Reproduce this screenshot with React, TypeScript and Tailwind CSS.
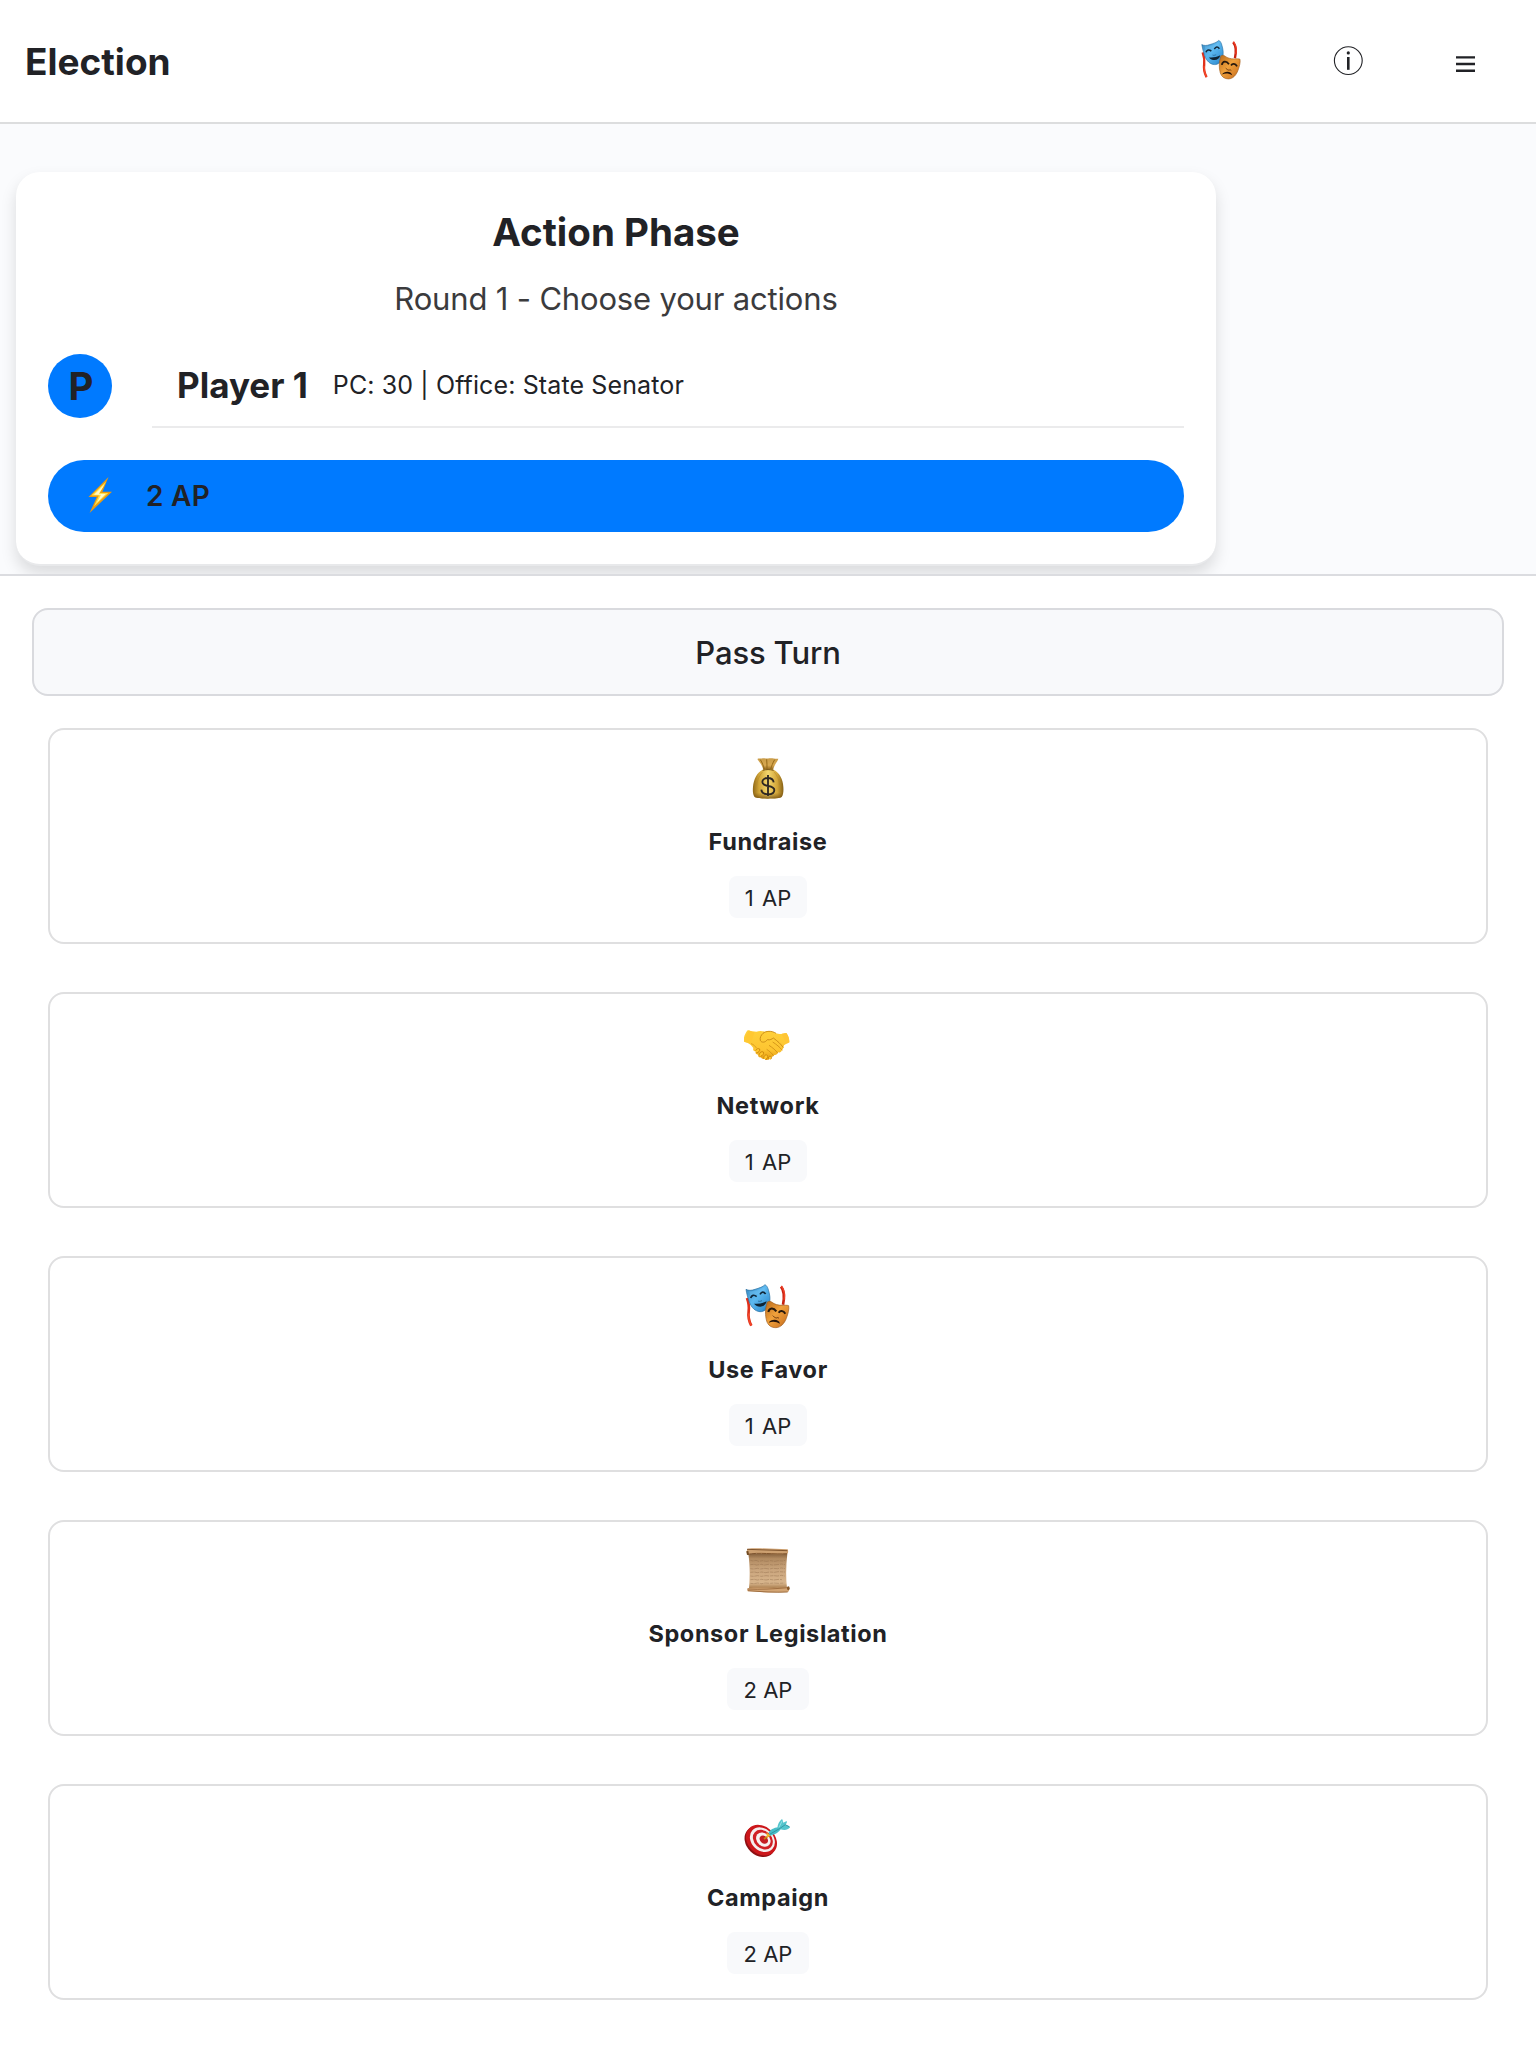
import type { ReactNode } from "react";

function MasksIcon({ className }: { className: string }) {
  return (
    <svg viewBox="252 36 144 144" className={className}>
      <defs>
        <linearGradient id="maskBlue" x1="0" y1="0" x2="1" y2="1">
          <stop offset="0" stopColor="#2f7fb8" />
          <stop offset="0.45" stopColor="#5db9f0" />
          <stop offset="0.8" stopColor="#3a97d8" />
          <stop offset="1" stopColor="#1c5c94" />
        </linearGradient>
        <linearGradient id="maskGold" x1="0" y1="0" x2="1" y2="1">
          <stop offset="0" stopColor="#b8691a" />
          <stop offset="0.45" stopColor="#f0a13c" />
          <stop offset="0.75" stopColor="#d9832a" />
          <stop offset="1" stopColor="#8a4a10" />
        </linearGradient>
      </defs>
      <path d="M261 84c5 14 7 26 5 40s-2 24 8 43" fill="none" stroke="#e0301a" strokeWidth="8" />
      <path d="M266 130c-1 12 1 24 8 37" fill="none" stroke="#f4482a" strokeWidth="4" />
      <path d="M363 50c9 11 12 26 6 54" fill="none" stroke="#c8210f" strokeWidth="8" />
      <path d="M364 48c9 12 12 24 8 42" fill="none" stroke="#ee4028" strokeWidth="4" />
      <path d="M258 58c7 4 16 4 27 0 13-4 23-7 30-14 4 2 7 6 9 12 6 18 8 33 3 47-5 15-16 23-27 22-14-1-26-12-32-29-4-11-8-24-10-38z" fill="url(#maskBlue)" stroke="#246b9d" strokeWidth="2" />
      <path d="M268 64c14 1 32-4 44-13 5 8 7 16 8 26-16-10-34-6-48 4-2-7-3-11-4-17z" fill="#7cc9f5" opacity=".35" />
      <path d="M272 84c3-9 10-11 18-4M300 73c5-8 11-9 17-1" fill="none" stroke="#10283b" strokeWidth="5" />
      <path d="M282 101c13 2 25-1 38-7-2 10-10 16-19 16-8 0-14-3-19-9z" fill="#0f2434" />
      <path d="M294 93c3 2 8 1 12-1" fill="none" stroke="#1d557f" strokeWidth="2" />
      <path d="M322 96c6-3 9-3 14 1 8 6 18 9 30 9 8 0 15-1 20 1 2 10-2 25-7 38-6 16-17 28-32 28-13 0-23-7-27-20-5-17-5-37 2-57z" fill="url(#maskGold)" stroke="#a05b19" strokeWidth="2" />
      <path d="M325 126c3-13 15-15 24-2M356 128c4-7 14-8 20 3" fill="none" stroke="#28190d" strokeWidth="6" />
      <path d="M338 137c4 4 7 6 11 7 3-2 6-1 8 1" fill="none" stroke="#6b3910" strokeWidth="3" />
      <path d="M326 158c5-10 30-14 34 3-10-6-22-8-34-3z" fill="#241309" />
    </svg>
  );
}

function MoneyBagIcon({ className }: { className: string }) {
  return (
    <svg viewBox="252 42 144 144" className={className}>
      <defs>
        <linearGradient id="bag" x1="0" y1="0" x2="1" y2="0">
          <stop offset="0" stopColor="#8f6818" />
          <stop offset="0.2" stopColor="#d0a436" />
          <stop offset="0.5" stopColor="#f4d76e" />
          <stop offset="0.8" stopColor="#d2a538" />
          <stop offset="1" stopColor="#856015" />
        </linearGradient>
        <linearGradient id="bagNeck" x1="0" y1="0" x2="0" y2="1">
          <stop offset="0" stopColor="#c99c48" />
          <stop offset="0.6" stopColor="#d8a850" />
          <stop offset="1" stopColor="#8a5f18" />
        </linearGradient>
        <linearGradient id="bagBase" x1="0" y1="0" x2="0" y2="1">
          <stop offset="0.8" stopColor="#7a5210" stopOpacity="0" />
          <stop offset="1" stopColor="#6b470c" stopOpacity=".8" />
        </linearGradient>
      </defs>
      <path d="M292 57c5-3 11 0 16-2 8-2 12 2 19 0 9-2 16 2 28 1-2 9-12 17-16 34h-29c-2-14-12-23-18-33z" fill="url(#bagNeck)" />
      <path d="M301 59c6 9 9 18 12 29M320 58c1 10 1 19 1 29M344 59c-6 10-9 19-12 28" stroke="#936817" strokeWidth="3" fill="none" />
      <path d="M308 89c10-3 23-3 33 0 18 9 28 29 29 51 1 14 0 24-5 31-5 6-74 7-81 0-6-7-6-19-5-31 2-22 12-43 29-51z" fill="url(#bag)" />
      <path d="M308 89c10-3 23-3 33 0 18 9 28 29 29 51 1 14 0 24-5 31-5 6-74 7-81 0-6-7-6-19-5-31 2-22 12-43 29-51z" fill="url(#bagBase)" />
      <path d="M308 95c-10 12-16 24-18 42M342 95c9 11 15 23 17 40" stroke="#b08226" strokeWidth="2" fill="none" opacity=".7" />
      <path d="M308 91c10-3 22-3 33 0" stroke="#755012" strokeWidth="3" fill="none" />
      <path d="M341 127c-1-9-8-13-18-13-9 0-16 5-16 12 0 17 36 7 36 24 0 8-8 13-19 13s-19-5-20-14M324 105v63" stroke="#2d2722" strokeWidth="5.5" fill="none" />
    </svg>
  );
}

function HandshakeIcon({ className }: { className: string }) {
  return (
    <svg viewBox="248 24 144 144" className={className}>
      <defs>
        <linearGradient id="hands" x1="0" y1="0" x2="0" y2="1">
          <stop offset="0" stopColor="#ffd03a" />
          <stop offset="0.65" stopColor="#fdc531" />
          <stop offset="1" stopColor="#e39b12" />
        </linearGradient>
      </defs>
      <path d="M263 61c7 4 14 4 22 4 8-3 17-3 25 0 9-4 22-2 34 5 12 4 20 1 31-1 6 7 9 17 9 28-7 4-11 5-16 9-1 6-3 12-7 16-2 4-6 6-10 5-3 6-7 9-12 8-4 6-8 7-13 5-1 6-4 10-8 9-4 2-7 0-8-3-5 2-9 0-11-4-6 1-9-3-9-8-6 0-9-5-7-10-6 0-9-4-7-10-4-6-8-10-13-13-5-3-10-3-16-6-1-11 4-25 12-34z" fill="url(#hands)" />
      <path d="M263 62c-7 9-12 21-11 32l15 6c5-10 10-22 12-34z" fill="#ffc832" />
      <path d="M375 69c6 7 9 18 9 28l-8 4c-5-9-10-18-15-30z" fill="#ffc535" />
      <path d="M344 70c-13-9-31-7-39 0-6 6-10 13-8 21 3 8 15 7 21-2 8 2 14-2 18-5 13 10 22 17 30 29" fill="none" stroke="#c58412" strokeWidth="2.6" strokeLinejoin="round" />
      <path d="M323 106c11 7 20 15 26 23M334 96c11 7 22 16 29 25M316 118c9 6 16 12 20 19" fill="none" stroke="#cf8e14" strokeWidth="2.5" />
      <path d="M283 122c2-5 7-8 12-5 2 5-4 12-10 11M294 134c1-7 7-11 12-8 3 4-2 11-8 13M307 145c1-8 6-13 11-9 3 5-1 9-5 12M321 148c-1-6 3-11 7-9 4 3 3 6 0 9" fill="#ffc72f" stroke="#c78108" strokeWidth="2.5" />
      <path d="M269 101c8 2 13 8 17 14" fill="none" stroke="#dfa01c" strokeWidth="3" />
    </svg>
  );
}

const scrollLines = [
  "M361 91l8 2 9-2 8 3 12-2 11 2 13-2 12 2 11-2 12 1 9-2",
  "M361 104l11-1 8 2 14-2 9 2 13-2 11 2 14-1 14-2 10 2",
  "M361 116l9 1 12-2 9 2 14-2 13 2 10-2 15 1 11-2 11 2",
  "M361 127l12-1 9 2 13-2 11 2 13-2 14 1 12-2 20 1",
  "M361 138l9 1 13-2 11 2 14-2 9 1 15-1 10 1 13-2 9 2",
  "M361 149l12-1 9 2 12-2 14 2 11-2 12 2 16-2 9 1",
  "M361 160l10 1 12-2 12 2 11-2 14 1 12-1 14 1 17-1",
];

function ScrollIcon({ className }: { className: string }) {
  return (
    <svg viewBox="342 48 144 144" className={className}>
      <defs>
        <linearGradient id="paper" x1="0" y1="0" x2="0" y2="1">
          <stop offset="0" stopColor="#85603d" />
          <stop offset="0.14" stopColor="#b18a60" />
          <stop offset="0.45" stopColor="#c9a47c" />
          <stop offset="0.85" stopColor="#d8b58c" />
          <stop offset="1" stopColor="#a87c4c" />
        </linearGradient>
      </defs>
      <path d="M355 71h117c-4 34-5 69-1 104H357c3-35 3-70-2-104z" fill="url(#paper)" />
      <path d="M353 56c30-3 81 1 120 2 2 4 2 8 0 13-31 3-60 1-90 0-10-1-22 0-29 3-5-4-5-12-1-18z" fill="#cda070" />
      <path d="M351 58l121 4M354 73c28-7 81 1 117-2" stroke="#80552e" strokeWidth="3" fill="none" />
      <path d="M349 64l6-1 2 11-6 1z" fill="#704921" />
      <path d="M353 175c29-4 82 1 121-3 4 3 5 10 0 14-39 3-84 1-121-2-2-3-2-6 0-9z" fill="#d3a574" />
      <path d="M354 182c40 3 80 6 119 4M353 177c39 2 75 0 121-4" stroke="#956437" strokeWidth="2.5" fill="none" />
      <ellipse cx="475" cy="175" rx="4" ry="6" fill="#885828" />
      {scrollLines.map((d) => (
        <path key={d} d={d} stroke="#8d6b48" strokeWidth="1.8" strokeDasharray="10 2 15 3" fill="none" opacity=".7" />
      ))}
    </svg>
  );
}

function TargetIcon({ className }: { className: string }) {
  return (
    <svg viewBox="252 30 144 144" className={className}>
      <g transform="rotate(43 303 122)">
        <ellipse cx="303" cy="126" rx="51" ry="41" fill="#8f1013" />
        <ellipse cx="303" cy="120" rx="51" ry="41" fill="#cc171b" />
        <ellipse cx="304" cy="117" rx="41" ry="33" fill="#f5eeee" />
        <ellipse cx="305" cy="116" rx="33" ry="26" fill="#d02025" />
        <ellipse cx="306" cy="115" rx="24" ry="19" fill="#f7f0f0" />
        <ellipse cx="307" cy="114" rx="14" ry="11" fill="#c51f24" />
      </g>
      <path d="M312 117l20-14" stroke="#c8860f" strokeWidth="5" />
      <path d="M319 97l14 10-12 5z" fill="#f1b728" />
      <path d="M326 98c4-8 15-15 29-16l7 6c-5 9-17 16-32 19z" fill="#48bec8" />
      <path d="M352 84c1-12 6-21 14-27 3 4 3 8 4 11l10-5c2 5-1 8-4 11 6 0 11 3 14 8-7 9-17 9-29 6z" fill="#53c5cd" />
      <path d="M329 103l31-18 16-11 13 7" stroke="#25818e" strokeWidth="2" fill="none" />
      <path d="M357 82l10-20" stroke="#90e0e4" strokeWidth="3" />
    </svg>
  );
}

function BoltIcon() {
  return (
    <svg viewBox="0 0 24 36" className="-mt-0.5 h-9 w-6">
      <path d="M20.5 0 .5 20h8.3L1.6 36 24 14.8h-9.6z" fill="#e99b13" />
      <path d="M18.2 4.5 3.3 18.6h7.6L6 29.2 20.3 16h-8.6z" fill="#ffe04a" />
      <path d="M16.5 7.5 6 17.8h7L9 25.5 17.6 17H10.7z" fill="#fff9c9" />
    </svg>
  );
}

function InfoIcon() {
  return (
    <svg viewBox="0 0 30 30" className="h-[30px] w-[30px]" fill="none">
      <circle cx="15.3" cy="14.6" r="13.9" stroke="#212226" strokeWidth="1.1" />
      <path d="M15.3 11v12.8" stroke="#212226" strokeWidth="2.6" />
      <circle cx="15.3" cy="6.9" r="1.6" fill="#212226" />
    </svg>
  );
}

function MenuIcon() {
  return (
    <svg viewBox="0 0 19 16" className="h-4 w-[19px]" stroke="#212226" strokeWidth="2.4">
      <path d="M0 1.4h19M0 8h19M0 14.8h19" />
    </svg>
  );
}

type Action = { name: string; ap: number; icon: ReactNode };

const actions: Action[] = [
  { name: "Fundraise", ap: 1, icon: <MoneyBagIcon className="size-12" /> },
  { name: "Network", ap: 1, icon: <HandshakeIcon className="size-12" /> },
  { name: "Use Favor", ap: 1, icon: <MasksIcon className="size-12" /> },
  { name: "Sponsor Legislation", ap: 2, icon: <ScrollIcon className="size-12" /> },
  { name: "Campaign", ap: 2, icon: <TargetIcon className="size-12" /> },
];

function ActionCard({ action }: { action: Action }) {
  return (
    <button className="flex h-[216px] w-full flex-col items-center rounded-2xl border-2 border-[#dfdfe0] bg-white pt-6">
      {action.icon}
      <span className="mt-[25px] text-[23.5px] leading-[30px] font-bold tracking-[0.6px]">{action.name}</span>
      <span
        className={`mt-[19px] flex h-[42px] items-center justify-center rounded-lg bg-[#f8f9fb] pt-0.5 text-[22px] leading-none ${
          action.ap === 1 ? "w-[78px] [word-spacing:2px]" : "w-[82px]"
        }`}
      >
        {action.ap} AP
      </span>
    </button>
  );
}

export default function App() {
  return (
    <div className="flex h-[2048px] w-[1536px] flex-col overflow-hidden bg-white font-['Inter',sans-serif] text-[#212226]">
      <header className="flex h-[124px] shrink-0 items-center justify-between border-b-2 border-[#dcddde] pr-[61px] pl-[25px]">
        <h1 className="text-[37px] leading-none font-bold">Election</h1>
        <div className="flex items-center">
          <MasksIcon className="-mt-[3px] size-[43px]" />
          <button className="ml-[90px]">
            <InfoIcon />
          </button>
          <button className="mt-[6px] ml-[93px]">
            <MenuIcon />
          </button>
        </div>
      </header>

      <section className="h-[452px] shrink-0 overflow-hidden border-b-2 border-[#dbdce0] bg-[#fafbfd] px-4 pt-12">
        <div className="flex h-[394px] w-[1200px] flex-col rounded-3xl border-b-2 border-[#e8e9eb] bg-white px-8 pt-[38px] shadow-[0_8px_16px_rgba(0,0,0,0.13)]">
          <h2 className="text-center text-[38.5px] leading-[44px] font-bold">Action Phase</h2>
          <p className="mt-[26px] text-center text-[31px] leading-[38px] tracking-[-0.17px] text-[#3b3b3d]">
            Round 1 - Choose your actions
          </p>

          <div className="mt-[36px] flex h-[74px] gap-10">
            <div className="flex size-16 items-center justify-center rounded-full bg-[#007aff] pl-0.5 text-[38.5px] leading-none font-bold">
              P
            </div>
            <div className="flex flex-1 items-center border-b-2 border-[#ebebec] pb-2.5 pl-[25px]">
              <span className="text-[35px] leading-none font-bold">Player 1</span>
              <span className="ml-[25px] text-[25px] leading-none tracking-[0.12px]">PC: 30 | Office: State Senator</span>
            </div>
          </div>

          <div className="mt-8 flex h-[72px] items-center rounded-full bg-[#007aff] pl-10">
            <BoltIcon />
            <span className="ml-[34px] text-[28px] leading-none font-semibold tracking-[0.3px]">2 AP</span>
          </div>
        </div>
      </section>

      <main className="flex flex-1 flex-col px-8 pt-8">
        <button className="h-[88px] shrink-0 rounded-2xl border-2 border-[#d9dade] bg-[#f8f9fb] text-[31px] leading-none font-medium tracking-[-0.15px]">
          Pass Turn
        </button>
        <div className="mt-8 flex flex-col gap-12 px-4">
          {actions.map((action) => (
            <ActionCard key={action.name} action={action} />
          ))}
        </div>
      </main>
    </div>
  );
}
